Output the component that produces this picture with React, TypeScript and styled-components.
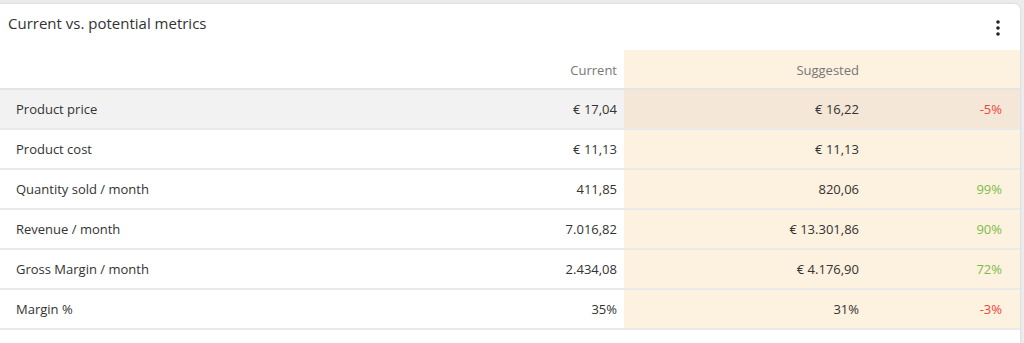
import React from 'react';
import styled, { createGlobalStyle } from 'styled-components';

const GlobalStyle = createGlobalStyle`
  html, body {
    margin: 0;
    padding: 0;
    background: #ececec;
    font-family: "Open Sans", "Lato", sans-serif;
    color: #333;
  }
`;

const Page = styled.div`
  width: 1024px;
  height: 343px;
  overflow: hidden;
  padding-top: 4px;
  box-sizing: border-box;
`;

const Card = styled.div`
  width: 1020px;
  height: 339px;
  background: #fff;
  border-radius: 0 6px 0 0;
  box-shadow: 0 0 3px rgba(0, 0, 0, 0.12);
  display: flex;
  flex-direction: column;
`;

const CardHeader = styled.div`
  height: 46px;
  display: flex;
  align-items: flex-start;
  justify-content: space-between;
  padding: 9px 14px 0 8px;
  box-sizing: border-box;
`;

const Title = styled.div`
  font-size: 15px;
  color: #333;
  line-height: 20px;
`;

const MenuButton = styled.button`
  border: 0;
  background: none;
  padding: 0;
  margin-top: 7px;
  width: 16px;
  height: 16px;
  display: flex;
  align-items: center;
  justify-content: center;
  cursor: pointer;
`;

const Row = styled.div<{ $shaded?: boolean }>`
  display: grid;
  grid-template-columns: 1fr 130px 242px 154px;
  height: 40px;
  border-bottom: 2px solid #e9e9e9;
  box-sizing: border-box;
  background: ${(p) => (p.$shaded ? '#f2f2f2' : 'transparent')};
`;

const HeadRow = styled(Row)`
  border-bottom: 2px solid #e4e4e4;
`;

const Cell = styled.div<{ $align?: 'left' | 'right'; $suggested?: boolean; $shaded?: boolean; $pad?: number }>`
  display: flex;
  align-items: center;
  justify-content: ${(p) => (p.$align === 'left' ? 'flex-start' : 'flex-end')};
  padding: ${(p) => (p.$align === 'left' ? '0 0 0 16px' : `0 ${p.$pad ?? 7}px 0 0`)};
  font-size: 13px;
  color: #333;
  background: ${(p) =>
    p.$suggested ? (p.$shaded ? '#f4e7d7' : '#fdf1df') : 'transparent'};
`;

const HeadCell = styled(Cell)`
  color: #777;
  padding-top: 1px;
`;

const Delta = styled.span<{ $tone: 'up' | 'down' }>`
  color: ${(p) => (p.$tone === 'up' ? '#7cbd4a' : '#f0443a')};
`;

type Metric = {
  label: string;
  current: string;
  suggested: string;
  delta?: string;
};

const metrics: Metric[] = [
  { label: 'Product price', current: '€ 17,04', suggested: '€ 16,22', delta: '-5%' },
  { label: 'Product cost', current: '€ 11,13', suggested: '€ 11,13' },
  { label: 'Quantity sold / month', current: '411,85', suggested: '820,06', delta: '99%' },
  { label: 'Revenue / month', current: '7.016,82', suggested: '€ 13.301,86', delta: '90%' },
  { label: 'Gross Margin / month', current: '2.434,08', suggested: '€ 4.176,90', delta: '72%' },
  { label: 'Margin %', current: '35%', suggested: '31%', delta: '-3%' },
];

const DotsIcon = () => (
  <svg width="4" height="16" viewBox="0 0 4 16">
    <circle cx="2" cy="2" r="1.8" fill="#222" />
    <circle cx="2" cy="8" r="1.8" fill="#222" />
    <circle cx="2" cy="14" r="1.8" fill="#222" />
  </svg>
);

const App = () => (
  <>
    <GlobalStyle />
    <Page>
      <Card>
        <CardHeader>
          <Title>Current vs. potential metrics</Title>
          <MenuButton aria-label="More options">
            <DotsIcon />
          </MenuButton>
        </CardHeader>
        <HeadRow>
          <HeadCell $align="left" />
          <HeadCell>Current</HeadCell>
          <HeadCell $suggested>Suggested</HeadCell>
          <HeadCell $suggested />
        </HeadRow>
        {metrics.map((m, i) => {
          const shaded = i === 0;
          return (
            <Row key={m.label} $shaded={shaded}>
              <Cell $align="left">{m.label}</Cell>
              <Cell>{m.current}</Cell>
              <Cell $suggested $shaded={shaded}>{m.suggested}</Cell>
              <Cell $suggested $shaded={shaded} $pad={18}>
                {m.delta && (
                  <Delta $tone={m.delta.startsWith('-') ? 'down' : 'up'}>{m.delta}</Delta>
                )}
              </Cell>
            </Row>
          );
        })}
      </Card>
    </Page>
  </>
);

export default App;
